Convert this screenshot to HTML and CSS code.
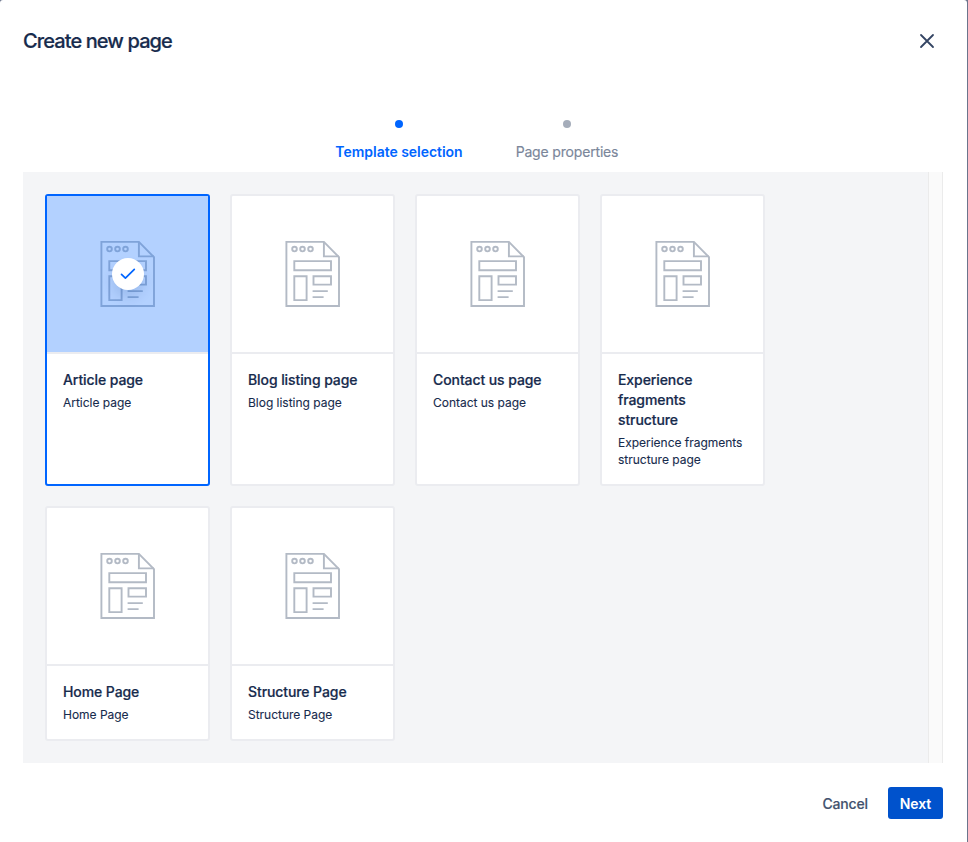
FILE: index.html
```html
<!DOCTYPE html>
<html lang="en">
<head>
<meta charset="utf-8">
<title>Create new page</title>
<link rel="stylesheet" href="styles.css">
</head>
<body>
<svg class="defs" aria-hidden="true">
  <symbol id="page-icon" viewBox="0 0 56 68">
    <g fill="none" stroke="currentColor" stroke-width="1.9">
      <path d="M1.4 1.9H38.9L54 17.2V66H1.4Z"/>
      <path d="M38.9 1.9V16.4H54"/>
      <circle cx="9.5" cy="9.1" r="2.3"/>
      <circle cx="17.5" cy="9.1" r="2.3"/>
      <circle cx="25.5" cy="9.1" r="2.3"/>
      <path d="M9.3 21.1H46V30.2H9.3ZM9.3 36.2H21.6V60.1H9.3ZM28.5 36.2H46V44.6H28.5ZM27.6 51.1H42.8M27.6 57.1H38.6"/>
    </g>
  </symbol>
</svg>
<main class="dialog">
  <header class="header">
    <h1>Create new page</h1>
    <button class="close" aria-label="Close"><svg width="16" height="16" viewBox="0 0 16 16"><path d="M2 2L14 14M14 2L2 14" fill="none" stroke="#344563" stroke-width="1.8" stroke-linecap="round"/></svg></button>
  </header>
  <ol class="steps">
    <li class="step active">Template selection</li>
    <li class="step">Page properties</li>
  </ol>
  <section class="panel">
    <div class="grid">
      <article class="card selected">
        <div class="thumb"><svg class="icon"><use href="#page-icon"/></svg>
          <span class="check"><svg width="16" height="12" viewBox="0 0 16 12"><path d="M1.5 6.4L5.4 10.2L14.3 1.3" fill="none" stroke="#0065ff" stroke-width="1.7" stroke-linecap="round" stroke-linejoin="round"/></svg></span>
        </div>
        <div class="info"><h2>Article page</h2><p>Article page</p></div>
      </article>
      <article class="card">
        <div class="thumb"><svg class="icon"><use href="#page-icon"/></svg></div>
        <div class="info"><h2>Blog listing page</h2><p>Blog listing page</p></div>
      </article>
      <article class="card">
        <div class="thumb"><svg class="icon"><use href="#page-icon"/></svg></div>
        <div class="info"><h2>Contact us page</h2><p>Contact us page</p></div>
      </article>
      <article class="card">
        <div class="thumb"><svg class="icon"><use href="#page-icon"/></svg></div>
        <div class="info"><h2>Experience fragments structure</h2><p>Experience fragments structure page</p></div>
      </article>
      <article class="card">
        <div class="thumb"><svg class="icon"><use href="#page-icon"/></svg></div>
        <div class="info"><h2>Home Page</h2><p>Home Page</p></div>
      </article>
      <article class="card">
        <div class="thumb"><svg class="icon"><use href="#page-icon"/></svg></div>
        <div class="info"><h2>Structure Page</h2><p>Structure Page</p></div>
      </article>
    </div>
    <div class="track"></div>
  </section>
  <footer class="footer">
    <button class="cancel">Cancel</button>
    <button class="next">Next</button>
  </footer>
</main>
</body>
</html>
```
FILE: styles.css
```css
* { box-sizing: border-box; }
body {
  margin: 0;
  height: 842px;
  overflow: hidden;
  background: #6b748c;
  color: #172b4d;
  font-family: Inter, "Liberation Sans", sans-serif;
}
h1, h2, p, ol { margin: 0; padding: 0; }
button { border: 0; padding: 0; background: none; font: inherit; }
.defs { display: none; }
.dialog {
  display: flex;
  flex-direction: column;
  width: 967px;
  height: 842px;
  padding: 0 24px 0 23px;
  background: #fff;
  border-radius: 3px 3px 0 0;
}
.header {
  display: flex;
  flex: none;
  justify-content: space-between;
  align-items: center;
  height: 80px;
  padding: 2px 8px 0 0;
}
h1 {
  font-size: 20px;
  font-weight: 500;
  line-height: 24px;
  letter-spacing: -0.9px;
  -webkit-text-stroke: 0.2px #172b4d;
}
.close { display: flex; margin-top: -1px; }
.steps {
  display: flex;
  flex: none;
  justify-content: center;
  height: 92px;
  padding: 40px 0 0 0;
  list-style: none;
}
.step {
  display: flex;
  flex-direction: column;
  align-items: center;
  width: 168px;
  color: #7a869a;
  font-size: 14px;
  line-height: 20px;
  letter-spacing: -0.17px;
  white-space: nowrap;
  -webkit-text-stroke: 0.15px #7a869a;
}
.step::before {
  content: "";
  width: 8px;
  height: 8px;
  margin-bottom: 14px;
  border-radius: 50%;
  background: #a5adba;
}
.active {
  color: #0065ff;
  font-weight: 600;
  letter-spacing: -0.03px;
  -webkit-text-stroke: 0;
}
.active::before { background: #0065ff; }
.panel {
  display: flex;
  flex: none;
  justify-content: space-between;
  height: 591px;
  background: #f4f5f7;
}
.grid {
  display: grid;
  grid-template-columns: repeat(4, 165px);
  grid-template-rows: 292px 235px;
  gap: 20px;
  padding: 22px 0 0 22px;
}
.card {
  display: flex;
  flex-direction: column;
  border: 2px solid #ebecf0;
  border-radius: 3px;
  background: #fff;
}
.thumb {
  display: flex;
  flex: none;
  justify-content: center;
  align-items: center;
  position: relative;
  height: 158px;
  border-bottom: 2px solid #ebecf0;
  color: #b3bac5;
}
.icon { width: 56px; height: 68px; }
.selected { border-color: #0065ff; }
.selected .thumb { background: #b3d1ff; background-clip: padding-box; color: #7fa3d9; }
.check {
  position: absolute;
  display: flex;
  align-items: center;
  justify-content: center;
  width: 32px;
  height: 32px;
  border-radius: 50%;
  background: #fff;
  box-shadow: 0 8px 12px rgba(9, 50, 120, .12);
}
.info { padding: 16px; }
h2 {
  font-size: 14px;
  font-weight: 500;
  line-height: 20px;
  letter-spacing: -0.09px;
  -webkit-text-stroke: 0.2px #172b4d;
}
p {
  margin-top: 4px;
  font-size: 12px;
  line-height: 17px;
  letter-spacing: -0.02px;
  -webkit-text-stroke: 0.1px #172b4d;
}
.track {
  width: 15px;
  border: solid #ebebeb;
  border-width: 0 1px;
  background: #fafafa;
}
.footer {
  display: flex;
  flex: none;
  justify-content: flex-end;
  align-items: center;
  gap: 20px;
  height: 79px;
  padding-top: 1px;
  font-size: 14px;
  font-weight: 500;
}
.cancel { color: #42526e; letter-spacing: -0.15px; -webkit-text-stroke: 0.15px #42526e; }
.next {
  width: 55px;
  height: 32px;
  border-radius: 3px;
  background: #0052cc;
  color: #fff;
  font-weight: 600;
  letter-spacing: -0.1px;
}
```
